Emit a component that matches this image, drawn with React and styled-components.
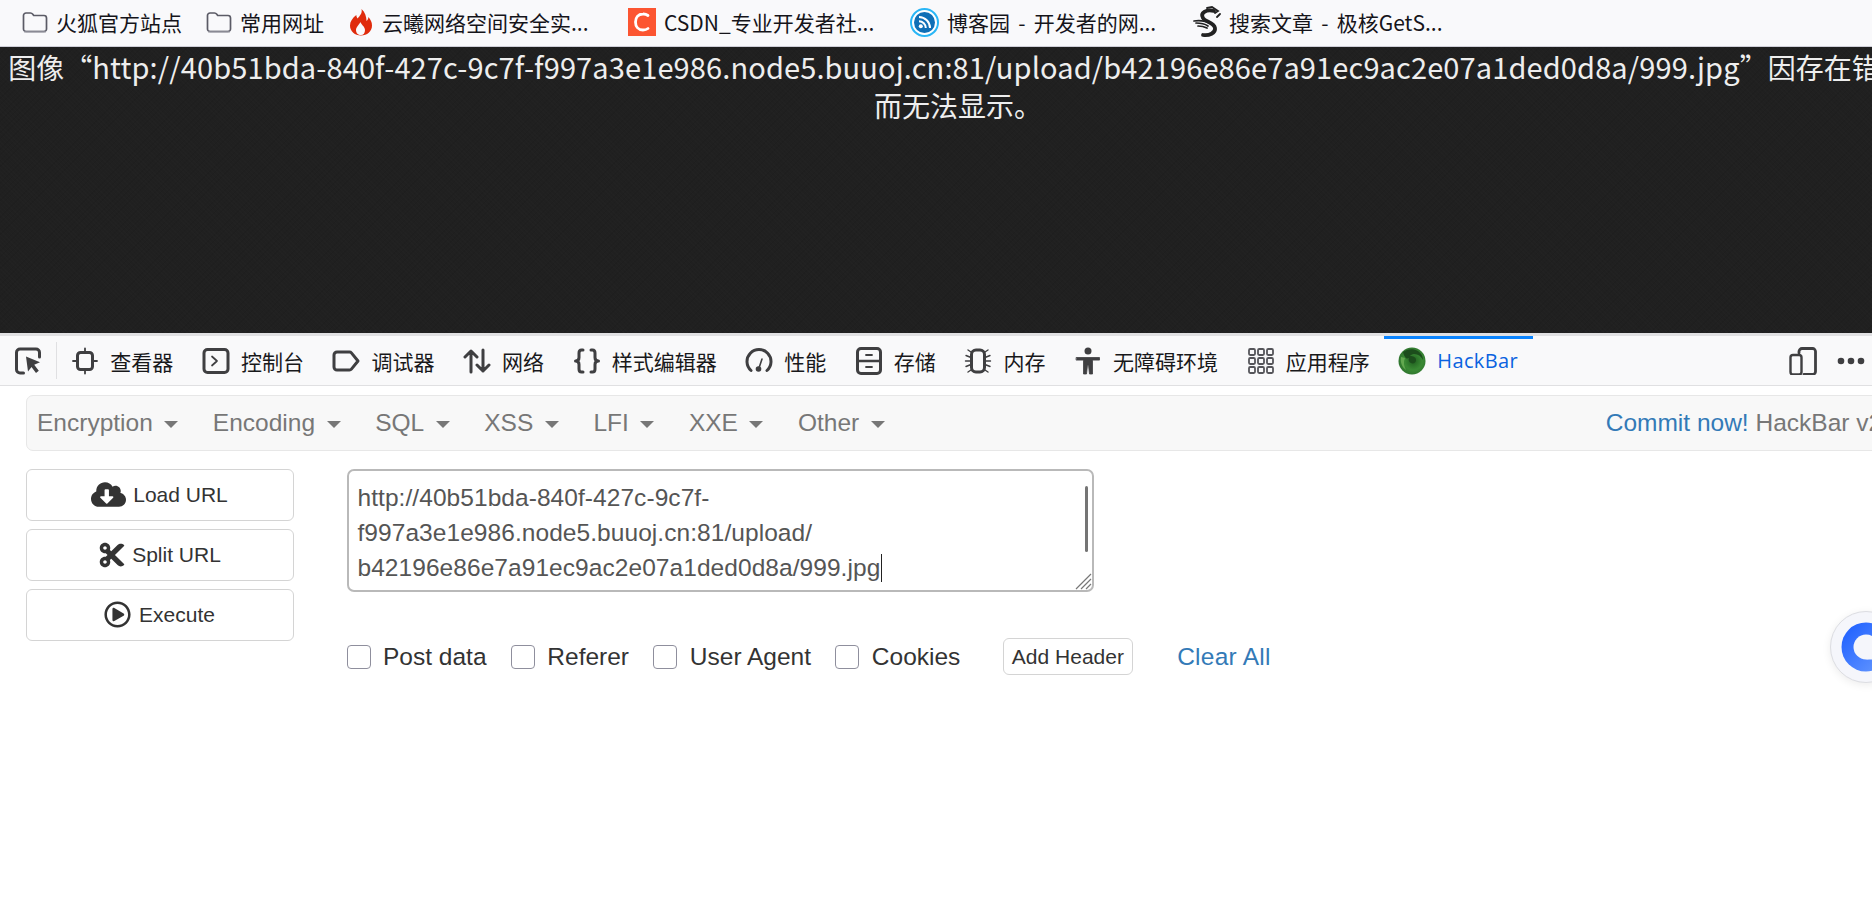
import React from 'react';
import styled, { createGlobalStyle } from 'styled-components';
import { FaCloudDownloadAlt, FaCut, FaRegPlayCircle } from 'react-icons/fa';

const cjk = '"Noto Sans CJK SC", "Noto Sans", sans-serif';
const arial = '"Liberation Sans", Arial, sans-serif';
const iconDark = '#3f3f41';

const GlobalStyle = createGlobalStyle`
  html, body {
    margin: 0;
    padding: 0;
    background: #fff;
  }
`;

const Page = styled.div`
  position: relative;
  width: 1872px;
  height: 921px;
  overflow: hidden;
  background: #fff;
`;

const Bookmarks = styled.div`
  display: flex;
  align-items: center;
  gap: 24px;
  box-sizing: border-box;
  height: 47px;
  padding: 0 0 2px 22px;
  background: #f9f9fb;
  border-bottom: 1px solid #cfcfd8;
  font-family: ${cjk};
  font-size: 21px;
  color: #15141a;
`;

const Bookmark = styled.div`
  display: flex;
  align-items: center;
  gap: 8px;
  white-space: nowrap;
`;

const BookmarkText = styled.span`
  width: ${(props) => (props.wide ? '222px' : 'auto')};
  word-spacing: 3.5px;
`;

const ImageDoc = styled.div`
  box-sizing: border-box;
  width: 1916px;
  height: 286px;
  background-color: #202020;
  background-image:
    repeating-linear-gradient(45deg, rgba(255, 255, 255, 0.008) 0 1px, transparent 1px 3px),
    repeating-linear-gradient(-45deg, rgba(0, 0, 0, 0.05) 0 1px, transparent 1px 4px);
  color: #eee;
  font-family: ${cjk};
  font-size: 28px;
  line-height: 38px;
  text-align: center;
`;

const ImageDocLine = styled.div`
  white-space: nowrap;
`;

const ImageUrl = styled.span`
  font-size: 29px;
  letter-spacing: 0.12px;
`;

const Toolbar = styled.div`
  display: flex;
  align-items: stretch;
  box-sizing: border-box;
  height: 53px;
  background: #f9f9fa;
  border-top: 3px solid #e0e0e2;
  border-bottom: 1px solid #e0e0e2;
  font-family: ${cjk};
  font-size: 21px;
  color: #18181a;
`;

const PickButton = styled.div`
  display: flex;
  align-items: center;
  box-sizing: border-box;
  width: 57px;
  padding-left: 14px;
  position: relative;

  &::after {
    content: '';
    position: absolute;
    right: 0;
    top: 6px;
    bottom: 6px;
    width: 1px;
    background: #e0e0e2;
  }
`;

const Tab = styled.div`
  display: flex;
  align-items: center;
  gap: 11px;
  padding: 0 14.3px;
  white-space: nowrap;
  position: relative;
  color: ${(props) => (props.active ? '#0a62e0' : 'inherit')};
  font-family: ${(props) => (props.active ? '"Open Sans", sans-serif' : 'inherit')};
  letter-spacing: ${(props) => (props.active ? '0.4px' : '0')};
  font-size: ${(props) => (props.active ? '20px' : '21px')};

  &::before {
    content: '';
    display: ${(props) => (props.active ? 'block' : 'none')};
    position: absolute;
    left: 0;
    right: 0;
    top: 0;
    height: 3px;
    background: #0a84ff;
  }
`;

const ToolbarEnd = styled.div`
  display: flex;
  align-items: center;
  gap: 20px;
  margin-left: auto;
  padding-right: 7px;
`;

const Panel = styled.div`
  padding: 9px 0 0 25.5px;
  font-family: ${arial};
`;

const NavBar = styled.nav`
  display: flex;
  align-items: center;
  box-sizing: border-box;
  width: 1920px;
  height: 56px;
  gap: 34.6px;
  padding: 0 21.5px 0 10.5px;
  background: #f8f8f8;
  border: 1px solid #e7e7e7;
  border-radius: 7px;
  font-size: 24.5px;
  color: #777;
`;

const NavItem = styled.div`
  display: flex;
  align-items: center;
  gap: 11.5px;
`;

const Caret = styled.span`
  width: 0;
  height: 0;
  margin-top: 3px;
  border-top: 7px solid #777;
  border-left: 7px solid transparent;
  border-right: 7px solid transparent;
`;

const NavRight = styled.div`
  margin-left: auto;
  white-space: nowrap;
`;

const Link = styled.a`
  color: #337ab7;
  text-decoration: none;
`;

const ClearLink = styled(Link)`
  letter-spacing: 0.25px;
`;

const Work = styled.div`
  display: flex;
  gap: 53px;
  margin-top: 18px;
`;

const ActionColumn = styled.div`
  display: flex;
  flex-direction: column;
  gap: 8.5px;
  width: 268px;
`;

const ActionButton = styled.button`
  display: flex;
  align-items: center;
  justify-content: center;
  gap: ${(props) => props.gap || '6px'};
  box-sizing: border-box;
  height: 51.5px;
  padding: 0;
  background: #fff;
  border: 1.5px solid #d4d4d4;
  border-radius: 6px;
  font-family: ${arial};
  font-size: 21px;
  color: #333;

  svg {
    color: #333;
  }
`;

const Editor = styled.div`
  display: flex;
  flex-direction: column;
`;

const UrlBox = styled.div`
  position: relative;
  box-sizing: border-box;
  width: 747.5px;
  height: 123px;
  padding: 8.5px 9px;
  background: #fff;
  border: 2px solid #b9b9b9;
  border-radius: 7px;
  font-size: 24.5px;
  letter-spacing: 0.06px;
  line-height: 35px;
  color: #555;
  white-space: nowrap;
`;

const TextCaret = styled.span`
  display: inline-block;
  width: 1px;
  height: 28px;
  margin-left: 1px;
  vertical-align: -6px;
  background: #222;
`;

const ScrollThumb = styled.div`
  position: absolute;
  right: 4.5px;
  top: 15px;
  width: 3px;
  height: 66px;
  border-radius: 2px;
  background: #757575;
`;

const ResizeGrip = styled.svg`
  position: absolute;
  right: 0;
  bottom: 0;
`;

const OptionRow = styled.div`
  display: flex;
  align-items: center;
  margin-top: 46.5px;
  height: 36px;
  font-size: 24.5px;
  color: #333;
`;

const OptionLabel = styled.label`
  display: flex;
  align-items: center;
  gap: 12.5px;
  margin-right: 24.3px;
  white-space: nowrap;
`;

const CheckBox = styled.input.attrs({ type: 'checkbox' })`
  appearance: none;
  box-sizing: border-box;
  width: 24px;
  height: 24px;
  margin: 0;
  background: #fff;
  border: 1px solid #8f8f9d;
  border-radius: 4px;
`;

const AddHeader = styled.button`
  box-sizing: border-box;
  height: 37px;
  width: 130.5px;
  margin-left: 18px;
  margin-right: 44px;
  padding: 0;
  background: #fff;
  border: 1.5px solid #d4d4d4;
  border-radius: 6px;
  font-family: ${arial};
  font-size: 21px;
  color: #333;
`;

const FloatBall = styled.div`
  position: absolute;
  left: 1830px;
  top: 611px;
  box-sizing: border-box;
  width: 72px;
  height: 72px;
  display: flex;
  align-items: center;
  justify-content: center;
  background: #f5f6fb;
  border: 1px solid #dcdde2;
  border-radius: 50%;
  box-shadow: 0 2px 8px rgba(0, 0, 0, 0.08);
`;

const Glyph = ({ children, width = 28, height = 28, viewBox = '0 0 28 28' }) => (
  <svg
    width={width}
    height={height}
    viewBox={viewBox}
    fill="none"
    stroke={iconDark}
    strokeWidth="2.6"
    strokeLinecap="round"
    strokeLinejoin="round"
    style={{ flex: 'none' }}
  >
    {children}
  </svg>
);

const FolderIcon = () => (
  <svg width="26" height="24" viewBox="0 0 26 24" fill="none" stroke="#5b5b66" strokeWidth="1.7" strokeLinejoin="round">
    <path d="M1.5 5.5a2.5 2.5 0 0 1 2.5-2.5h4.5c1 0 1.7.5 2.3 1.3l.9 1.2h10.3a2.5 2.5 0 0 1 2.5 2.5v11a2.5 2.5 0 0 1-2.5 2.5H4a2.5 2.5 0 0 1-2.5-2.5z" />
    <path d="M2 21.6h22" stroke="#8a8a94" strokeWidth="1.6" />
  </svg>
);

const FlameIcon = () => (
  <svg width="26" height="28" viewBox="0 0 26 28">
    <path
      d="M13.5 1c1 4.5-1.500 6.500-4 9.500-.8-1-1.200-2.300-1.200-3.500C4.500 10 2 13.500 2 17.500 2 23.500 7 27.500 13 27.500s11-4 11-10c0-3.500-1.500-6-3.500-8.500-.2 1.800-.8 3-2 4C18.500 8.500 17 4 13.500 1z"
      fill="#e02b0c"
    />
    <path d="M13 27c-3 0-5-2-5-5s3-5 4.500-8c.5 2.500 4.500 4.500 4.500 8 0 3-1.500 5-4 5z" fill="#f9f9fb" />
  </svg>
);

const CsdnIcon = () => (
  <svg width="28" height="28" viewBox="0 0 28 28">
    <rect width="28" height="28" fill="#fc5531" />
    <path d="M20 7.500a8.200 8.200 0 0 0-5-1.500c-5 0-7.500 3.500-7.500 8s2.500 8 7.500 8c2 0 3.700-.5 5-1.500" fill="none" stroke="#fff" strokeWidth="2.800" strokeLinecap="round" />
  </svg>
);

const BlogIcon = () => (
  <svg width="29" height="29" viewBox="0 0 29 29">
    <circle cx="14.500" cy="14.500" r="13.500" fill="#fff" stroke="#29b6f6" strokeWidth="2" />
    <circle cx="14.500" cy="14.500" r="10.500" fill="#0f6fb6" />
    <circle cx="10.800" cy="18.200" r="2" fill="#fff" />
    <path d="M9 13.200a6.800 6.800 0 0 1 6.800 6.800M9 9a11 11 0 0 1 11 11" fill="none" stroke="#fff" strokeWidth="2" />
  </svg>
);

const DragonIcon = () => (
  <svg width="28" height="34" viewBox="0 0 28 34" fill="none" stroke="#222" strokeLinecap="round">
    <path d="M21 6C13 4 7 8 10 13c2 4 11 4 12 10 .8 5-6 8-12 7" strokeWidth="3.800" />
    <path d="M1 16c6-1 12 0 17 3M3 18c5 0 9 1 12 3M5 21c4 0 7 1 9 2" strokeWidth="1.700" />
    <path d="M14 3l5-1 6 4-3 2M24 12l3-3" strokeWidth="1.800" />
  </svg>
);

const PickIcon = () => (
  <Glyph>
    <path d="M9.500 26H6a3.500 3.500 0 0 1-3.500-3.500v-17A3.500 3.500 0 0 1 6 2h16a3.500 3.500 0 0 1 3.500 3.500V10" strokeWidth="3" />
    <path d="M12 9.500l14 5.800-5.800 2.400 4.600 6.100-2.800 2.200-4.500-6.100-3.500 4.600z" fill={iconDark} stroke="none" />
  </Glyph>
);

const InspectorIcon = () => (
  <Glyph>
    <rect x="6.500" y="5.500" width="15" height="17" rx="3" strokeWidth="3" />
    <path d="M14 1.500v4M14 22.500v4M2 14h4.500M21.500 14H26" strokeWidth="1.800" />
  </Glyph>
);

const ConsoleIcon = () => (
  <Glyph>
    <rect x="2" y="2.500" width="24" height="23" rx="3.500" strokeWidth="3" />
    <path d="M10 9.500l5 4.500-5 4.500" strokeWidth="1.700" />
  </Glyph>
);

const DebuggerIcon = () => (
  <Glyph>
    <path d="M5 5h12.500c.8 0 1.400.3 1.900.9L26 14l-6.600 8.100c-.5.600-1.100.9-1.900.9H5a3 3 0 0 1-3-3V8a3 3 0 0 1 3-3z" strokeWidth="3" />
  </Glyph>
);

const NetworkIcon = () => (
  <Glyph>
    <path d="M8 25V4M2 10l6-6 6 6M20 3v21M14 18l6 6 6-6" strokeWidth="3" />
  </Glyph>
);

const StyleIcon = () => (
  <Glyph>
    <path d="M10 3H8.500C6.500 3 6 4 6 6v4.500C6 12.500 5 14 2.500 14 5 14 6 15.500 6 17.500V22c0 2 .5 3 2.500 3H10" strokeWidth="3" />
    <path d="M18 3h1.500C21.500 3 22 4 22 6v4.500c0 2 1 3.500 3.500 3.500-2.500 0-3.500 1.500-3.500 3.500V22c0 2-.5 3-2.500 3H18" strokeWidth="3" />
  </Glyph>
);

const PerfIcon = () => (
  <Glyph>
    <path d="M6 23.500a12 12 0 1 1 16 0" strokeWidth="3" />
    <path d="M14 21l3-9" strokeWidth="1.600" />
    <circle cx="13.500" cy="22" r="2.800" fill={iconDark} stroke="none" />
  </Glyph>
);

const StorageIcon = () => (
  <Glyph>
    <rect x="2.500" y="1.500" width="23" height="25" rx="3.500" strokeWidth="3" />
    <path d="M2.500 14h23" strokeWidth="2.400" />
    <path d="M11 8h6M11 20h6" strokeWidth="1.800" />
  </Glyph>
);

const MemoryIcon = () => (
  <Glyph>
    <rect x="7.500" y="3" width="13" height="22" rx="4.500" strokeWidth="3" />
    <path d="M7 5L4 3M7 10.500L2 8.500M7 14H1.500M7 17.500l-5 2M7 23l-3 2M21 5l3-2M21 10.500l5-2M21 14h5.500M21 17.500l5 2M21 23l3 2" strokeWidth="1.400" />
  </Glyph>
);

const AccessIcon = () => (
  <Glyph>
    <circle cx="14" cy="4" r="3.500" fill={iconDark} stroke="none" />
    <path d="M2.500 10.500h23v2.600H18.500V27h-3l-1-9h-1l-1 9h-3V13.100H2.500z" fill={iconDark} stroke={iconDark} strokeWidth="0.800" />
  </Glyph>
);

const AppsIcon = () => (
  <Glyph>
    {[2, 11, 20].map((y) =>
      [2, 11, 20].map((x) => (
        <rect key={`${x}-${y}`} x={x} y={y} width="6" height="6" rx="1.200" strokeWidth="1.800" stroke="#55555a" />
      ))
    )}
  </Glyph>
);

const HackBarIcon = () => (
  <svg width="28" height="28" viewBox="0 0 28 28" style={{ flex: 'none' }}>
    <defs>
      <radialGradient id="hackbarGreen" cx="55%" cy="50%" r="60%">
        <stop offset="0%" stopColor="#1f5f1f" />
        <stop offset="55%" stopColor="#3a8a34" />
        <stop offset="100%" stopColor="#2c6f2c" />
      </radialGradient>
    </defs>
    <circle cx="14" cy="14" r="13.500" fill="url(#hackbarGreen)" />
    <path d="M5 5c4-3 10-4 15-1 3 2 5 5 5 9-2-4-5-6-9-6-2 0-3 1-4 2 3 0 6 1 6 4s-3 4-5 3c-2-.6-3-3-2-5-2 1-4 1-6-6z" fill="#1c4d1c" />
    <path d="M3 10c-1 5 1 10 5 13-2-4-3-8-1-12z" fill="#62a84f" />
  </svg>
);

const DeviceIcon = () => (
  <Glyph>
    <path d="M10 6V4.500A3 3 0 0 1 13 1.500h10.500a3 3 0 0 1 3 3v20a3 3 0 0 1-3 3H15" strokeWidth="2.800" />
    <rect x="1.500" y="8" width="11" height="19.500" rx="2.500" strokeWidth="2.400" />
  </Glyph>
);

const DotsIcon = () => (
  <svg width="28" height="8" viewBox="0 0 28 8" fill={iconDark}>
    <circle cx="4" cy="4" r="3.300" />
    <circle cx="14" cy="4" r="3.300" />
    <circle cx="24" cy="4" r="3.300" />
  </svg>
);

const BallIcon = () => (
  <svg width="50" height="50" viewBox="0 0 50 50">
    <defs>
      <linearGradient id="ballBlue" x1="0" y1="0" x2="1" y2="1">
        <stop offset="0%" stopColor="#1a5cff" />
        <stop offset="100%" stopColor="#6a9cff" />
      </linearGradient>
    </defs>
    <circle cx="25" cy="25" r="24.500" fill="url(#ballBlue)" />
    <circle cx="25" cy="25" r="12.500" fill="#f5f6fb" />
    <path d="M25 37.500h12v-6z" fill="#f5f6fb" />
  </svg>
);

const bookmarks = [
  { icon: <FolderIcon />, text: '火狐官方站点' },
  { icon: <FolderIcon />, text: '常用网址' },
  { icon: <FlameIcon />, text: '云曦网络空间安全实...', wide: true },
  { icon: <CsdnIcon />, text: 'CSDN_专业开发者社...', wide: true },
  { icon: <BlogIcon />, text: '博客园 - 开发者的网...', wide: true },
  { icon: <DragonIcon />, text: '搜索文章 - 极核GetS...' },
];

const tabs = [
  { icon: <InspectorIcon />, text: '查看器' },
  { icon: <ConsoleIcon />, text: '控制台' },
  { icon: <DebuggerIcon />, text: '调试器' },
  { icon: <NetworkIcon />, text: '网络' },
  { icon: <StyleIcon />, text: '样式编辑器' },
  { icon: <PerfIcon />, text: '性能' },
  { icon: <StorageIcon />, text: '存储' },
  { icon: <MemoryIcon />, text: '内存' },
  { icon: <AccessIcon />, text: '无障碍环境' },
  { icon: <AppsIcon />, text: '应用程序' },
  { icon: <HackBarIcon />, text: 'HackBar', active: true },
];

const menus = ['Encryption', 'Encoding', 'SQL', 'XSS', 'LFI', 'XXE', 'Other'];
const options = ['Post data', 'Referer', 'User Agent', 'Cookies'];

const App = () => (
  <Page>
    <GlobalStyle />
    <Bookmarks>
      {bookmarks.map((item) => (
        <Bookmark key={item.text}>
          {item.icon}
          <BookmarkText wide={item.wide}>{item.text}</BookmarkText>
        </Bookmark>
      ))}
    </Bookmarks>

    <ImageDoc>
      <ImageDocLine>
        图像“
        <ImageUrl>http://40b51bda-840f-427c-9c7f-f997a3e1e986.node5.buuoj.cn:81/upload/b42196e86e7a91ec9ac2e07a1ded0d8a/999.jpg</ImageUrl>
        ”因存在错误
      </ImageDocLine>
      <ImageDocLine>而无法显示。</ImageDocLine>
    </ImageDoc>

    <Toolbar>
      <PickButton>
        <PickIcon />
      </PickButton>
      {tabs.map((tab) => (
        <Tab key={tab.text} active={tab.active}>
          {tab.icon}
          {tab.text}
        </Tab>
      ))}
      <ToolbarEnd>
        <DeviceIcon />
        <DotsIcon />
      </ToolbarEnd>
    </Toolbar>

    <Panel>
      <NavBar>
        {menus.map((menu) => (
          <NavItem key={menu}>
            {menu}
            <Caret />
          </NavItem>
        ))}
        <NavRight>
          <Link>Commit now!</Link> HackBar v2.3.1
        </NavRight>
      </NavBar>

      <Work>
        <ActionColumn>
          <ActionButton gap="7px">
            <FaCloudDownloadAlt size={35} />
            Load URL
          </ActionButton>
          <ActionButton gap="6px">
            <FaCut size={28} />
            Split URL
          </ActionButton>
          <ActionButton gap="8px">
            <FaRegPlayCircle size={27} />
            Execute
          </ActionButton>
        </ActionColumn>

        <Editor>
          <UrlBox>
            http://40b51bda-840f-427c-9c7f-
            <br />
            f997a3e1e986.node5.buuoj.cn:81/upload/
            <br />
            b42196e86e7a91ec9ac2e07a1ded0d8a/999.jpg
            <TextCaret />
            <ScrollThumb />
            <ResizeGrip width="18" height="18" viewBox="0 0 18 18" stroke="#777" strokeWidth="1.200">
              <path d="M2 17L17 2M7 17L17 7M12 17l5-5" />
            </ResizeGrip>
          </UrlBox>
          <OptionRow>
            {options.map((option) => (
              <OptionLabel key={option}>
                <CheckBox />
                {option}
              </OptionLabel>
            ))}
            <AddHeader>Add Header</AddHeader>
            <ClearLink>Clear All</ClearLink>
          </OptionRow>
        </Editor>
      </Work>
    </Panel>

    <FloatBall>
      <BallIcon />
    </FloatBall>
  </Page>
);

export default App;
